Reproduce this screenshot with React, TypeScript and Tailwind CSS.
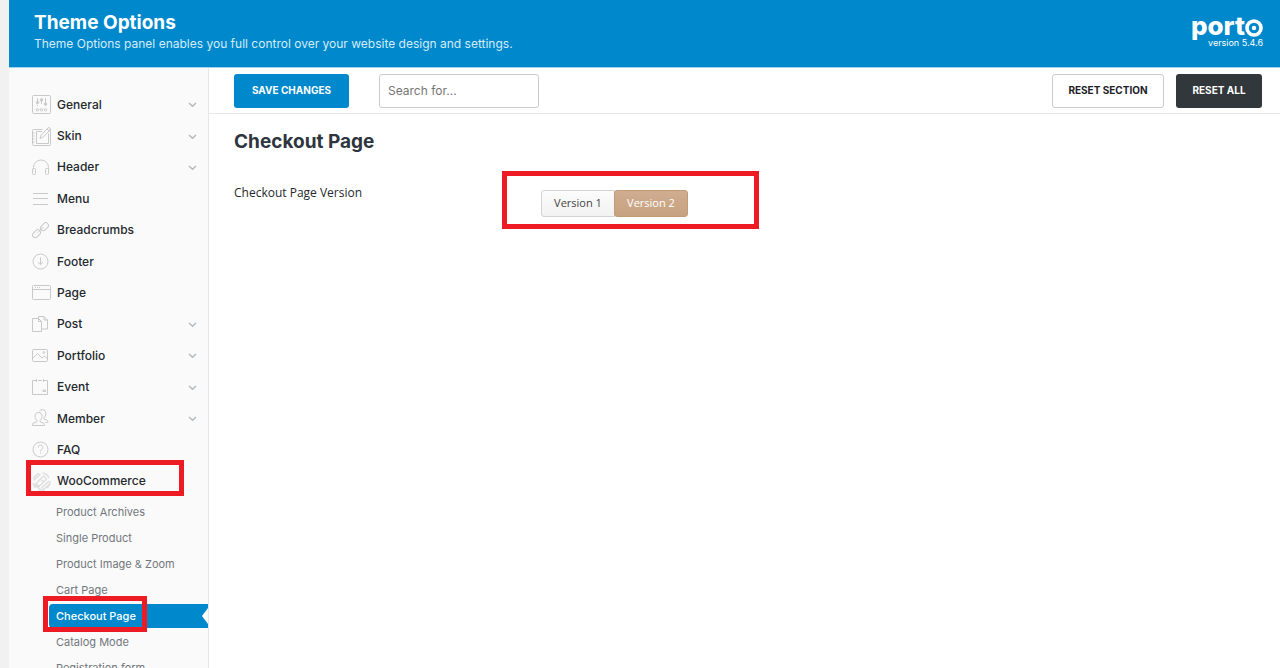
import type { ReactNode } from 'react';
import { clsx } from 'clsx';

type MenuItem = {
  label: string;
  icon: ReactNode;
  expandable?: boolean;
};

const menuItems: MenuItem[] = [
  {
    label: 'General',
    expandable: true,
    icon: (
      <>
        <rect x="1.5" y="1.5" width="18" height="18" rx="1" />
        <path d="M6.5 4v6M10.5 4v6M14.5 4v6M6.5 11v1M14.5 4v8" />
        <circle cx="6.5" cy="8.5" r="1.3" />
        <circle cx="10.5" cy="6" r="1.3" />
        <circle cx="14.5" cy="10" r="1.3" />
        <circle cx="6.5" cy="15.8" r="1.2" />
        <circle cx="10.5" cy="15.8" r="1.2" />
        <circle cx="14.5" cy="15.8" r="1.2" />
      </>
    ),
  },
  {
    label: 'Skin',
    expandable: true,
    icon: (
      <>
        <path d="M11.5 3.5h-9a1 1 0 0 0-1 1v14a1 1 0 0 0 1 1h16a1 1 0 0 0 1-1v-14l-1-1" />
        <path d="M11 5.5H5.5v12h12V7.5M1.5 7h2M1.5 10h2M1.5 13h2M1.5 16h2" />
        <path d="M9 12.5l1-3.3 7-7.2a1.3 1.3 0 0 1 2 2l-7 7.2zM16 3.2l2 2" />
      </>
    ),
  },
  {
    label: 'Header',
    expandable: true,
    icon: (
      <>
        <path d="M2.5 12.5v-2a7.5 7.5 0 0 1 15 0v2" />
        <rect x="1.5" y="11.5" width="3" height="6" rx="1" />
        <rect x="14.5" y="11.5" width="3" height="6" rx="1" />
      </>
    ),
  },
  { label: 'Menu', icon: <path d="M2 5.5h15M2 10.5h15M2 16.5h15" /> },
  {
    label: 'Breadcrumbs',
    icon: (
      <>
        <rect x="9" y="4" width="9" height="5.4" rx="2.7" transform="rotate(-45 13.5 6.7)" />
        <rect x="1" y="11" width="9" height="5.4" rx="2.7" transform="rotate(-45 5.5 13.7)" />
        <path d="M7 12.5l5.5-5.5" />
      </>
    ),
  },
  {
    label: 'Footer',
    icon: (
      <>
        <circle cx="9.5" cy="10.5" r="7.5" />
        <path d="M9.5 6.5v7M6.8 11l2.7 2.7 2.7-2.7" />
      </>
    ),
  },
  {
    label: 'Page',
    icon: (
      <>
        <rect x="1.5" y="3.5" width="18" height="14" rx="1" />
        <path d="M1.5 7.5h18M4 5.5h1M6 5.5h1M8 5.5h1" />
      </>
    ),
  },
  {
    label: 'Post',
    expandable: true,
    icon: (
      <>
        <path d="M1.5 4.5h6l3 3v10h-9zM7.5 4.5v3h3" />
        <path d="M7.5 4.5v-2H13l3.5 3.5v9h-6M13 2.5V6h3.5" />
      </>
    ),
  },
  {
    label: 'Portfolio',
    expandable: true,
    icon: (
      <>
        <rect x="1.5" y="4.5" width="15" height="12" rx="1" />
        <path d="M2 13l4.5-4.5L11 13l2.5-2 3 3" />
        <circle cx="12.8" cy="7.5" r=".9" />
      </>
    ),
  },
  {
    label: 'Event',
    expandable: true,
    icon: <path d="M5 3.5H1.5v14h15v-14H13M7 3.5h4M5.5 2v3M12.5 2v3M12 14.5h2.5V13H12z" />,
  },
  {
    label: 'Member',
    expandable: true,
    icon: (
      <>
        <path d="M7.5 4.5C5.2 4.5 4 6 4 8.3c0 2 .9 3.4 2 4v1.4l-4 1.6c-.6.3-.5 1.2-.5 2.2h12c0-1 .1-1.9-.5-2.2l-4-1.6v-1.4c1.1-.6 2-2 2-4 0-2.300-1.2-3.800-3.500-3.800z" />
        <path d="M8.5 3c.7-.9 1.700-1.300 3-1.300 2.300 0 3.300 1.500 3.300 3.800 0 2-.8 3.400-1.900 4v1.400l3.400 1.500c.6.3.5 1.200.5 2.100h-2.500" />
      </>
    ),
  },
  {
    label: 'FAQ',
    icon: (
      <>
        <circle cx="9.5" cy="10.5" r="7.5" />
        <path d="M7.2 8.5c0-3 4.6-3 4.6 0 0 1.8-2.3 1.800-2.300 3.800M9.5 13.500v1.200" />
      </>
    ),
  },
  {
    label: 'WooCommerce',
    icon: (
      <g stroke="#dededf" strokeWidth="1.4">
        <path d="M2.5 8A8.500 8.500 0 0 1 8 2.500M11.500 2a8.500 8.500 0 0 1 6.500 5M19 10a8.500 8.500 0 0 1-3 7M13.500 18.500a8.500 8.500 0 0 1-6 0M5 17a8.500 8.500 0 0 1-3-5" />
        <path d="M2.500 9.500l7-6.500M5 12.500l7.500-7.500 3 3-7.500 7.500zM9.500 8l3 3M3.500 13l5 5M10 17.500l8-7.500M12.500 18.500l6-5.500" />
      </g>
    ),
  },
];

const subItems = [
  'Product Archives',
  'Single Product',
  'Product Image & Zoom',
  'Cart Page',
  'Checkout Page',
  'Catalog Mode',
  'Registration form',
];

function Header() {
  return (
    <header className="flex h-[68px] shrink-0 items-start justify-between border-b border-[#9ed3ed] bg-[#0088cc] pr-[17px] pl-[25px] text-white">
      <div className="pt-3">
        <h1 className="text-[19px] leading-[22px] font-bold">Theme Options</h1>
        <p className="text-xs leading-5 text-[#d5ecf8]">
          Theme Options panel enables you full control over your website design and settings.
        </p>
      </div>
      <div className="flex flex-col items-end pt-3">
        <div className="flex items-center text-[26px] leading-7 font-extrabold">
          port
          <svg className="mt-1 size-[18px]" viewBox="0 0 18 18" aria-hidden="true">
            <circle cx="9" cy="9" r="7" fill="none" stroke="currentColor" strokeWidth="3.6" />
            <circle cx="9" cy="9" r="2.2" fill="currentColor" />
          </svg>
        </div>
        <span className="text-[9px] leading-1.5">version 5.4.6</span>
      </div>
    </header>
  );
}

function Chevron() {
  return (
    <svg className="ml-auto size-[9px]" viewBox="0 0 9 9" fill="none" stroke="#b4b9be" strokeWidth="1.5">
      <path d="M1 3l3.5 3.2L8 3" />
    </svg>
  );
}

function Sidebar() {
  return (
    <nav className="w-[200px] shrink-0 overflow-hidden border-r border-[#e7e7e7] bg-[#fafafa] pt-[21px]">
      <ul className="grid h-[408px] auto-rows-fr">
        {menuItems.map((item) => (
          <li key={item.label} className="relative">
            <a href="#" className="flex h-full items-center pr-[11px] pl-[22px] text-xs font-medium text-[#23282d]">
              <svg
                className="mr-[5px] size-[21px]"
                viewBox="0 0 21 21"
                fill="none"
                stroke="#c9c9cb"
                aria-hidden="true"
              >
                {item.icon}
              </svg>
              {item.label}
              {item.expandable && <Chevron />}
            </a>
            {item.label === 'WooCommerce' && (
              <span className="absolute -top-1.5 left-[17px] h-9 w-[158px] border-5 border-[#ed1c24]" />
            )}
          </li>
        ))}
      </ul>
      <ul className="mt-[3px] ml-10 flex flex-col gap-0.5">
        {subItems.map((label) => {
          const active = label === 'Checkout Page';
          return (
            <li key={label} className="relative">
              <a
                href="#"
                className={clsx(
                  'flex h-6 items-center rounded-l-sm pl-[7px] text-[11px]',
                  active ? 'bg-[#0088cc] font-medium text-white' : 'text-[#72777c]'
                )}
              >
                {label}
              </a>
              {active && (
                <>
                  <svg className="absolute top-1 right-0 h-4 w-1.5" viewBox="0 0 6 16" fill="#fff">
                    <path d="M6 0v16L0 8z" />
                  </svg>
                  <span className="absolute -top-2 -left-1.5 h-9 w-[104px] border-5 border-[#ed1c24]" />
                </>
              )}
            </li>
          );
        })}
      </ul>
    </nav>
  );
}

function Toolbar() {
  return (
    <div className="flex h-[46px] items-center border-b border-[#e7e7e7] pr-[18px] pl-[25px] text-[10px] font-bold">
      <button className="h-[34px] w-[115px] rounded-[3px] bg-[#0088cc] text-white">SAVE CHANGES</button>
      <input
        type="text"
        aria-label="Search for..."
        placeholder="Search for..."
        className="ml-[30px] h-[34px] w-40 rounded-[3px] border border-[#ccc] px-2 text-xs font-normal placeholder:text-[#757575]"
      />
      <button className="ml-auto h-[34px] w-28 rounded-[3px] border border-[#ccc] bg-white text-[#1d2127]">
        RESET SECTION
      </button>
      <button className="ml-3 h-[34px] w-[86px] rounded-[3px] bg-[#32373c] text-white">RESET ALL</button>
    </div>
  );
}

function CheckoutSection() {
  return (
    <section className="px-[25px] pt-4">
      <h2 className="text-[19px] leading-6 font-bold text-[#2e353e]">Checkout Page</h2>
      <div className="mt-[17px] flex items-start font-['Open_Sans',sans-serif]">
        <span id="version-label" className="w-[268px] pt-3 text-xs leading-5 text-[#23282d]">
          Checkout Page Version
        </span>
        <div className="w-[257px] border-5 border-[#ed1c24] pt-[14px] pb-[7px] pl-[34px]">
          <div role="group" aria-labelledby="version-label" className="flex h-[27px] text-[11px]">
            <button className="w-[74px] rounded-l-[3px] border border-[#d3d3d3] bg-gradient-to-b from-[#fcfcfc] to-[#f2f2f2] text-[#444]">
              Version 1
            </button>
            <button
              aria-pressed="true"
              className="-ml-px w-[74px] rounded-[3px] border border-[#c29a76] bg-gradient-to-b from-[#d0ad90] to-[#c7a281] text-white"
            >
              Version 2
            </button>
          </div>
        </div>
      </div>
    </section>
  );
}

export default function App() {
  return (
    <div className="flex h-screen flex-col overflow-hidden border-l-9 border-[#f1f1f1] bg-white font-['Inter',sans-serif]">
      <Header />
      <div className="flex min-h-0 flex-1">
        <Sidebar />
        <main className="min-w-0 flex-1">
          <Toolbar />
          <CheckoutSection />
        </main>
      </div>
    </div>
  );
}
